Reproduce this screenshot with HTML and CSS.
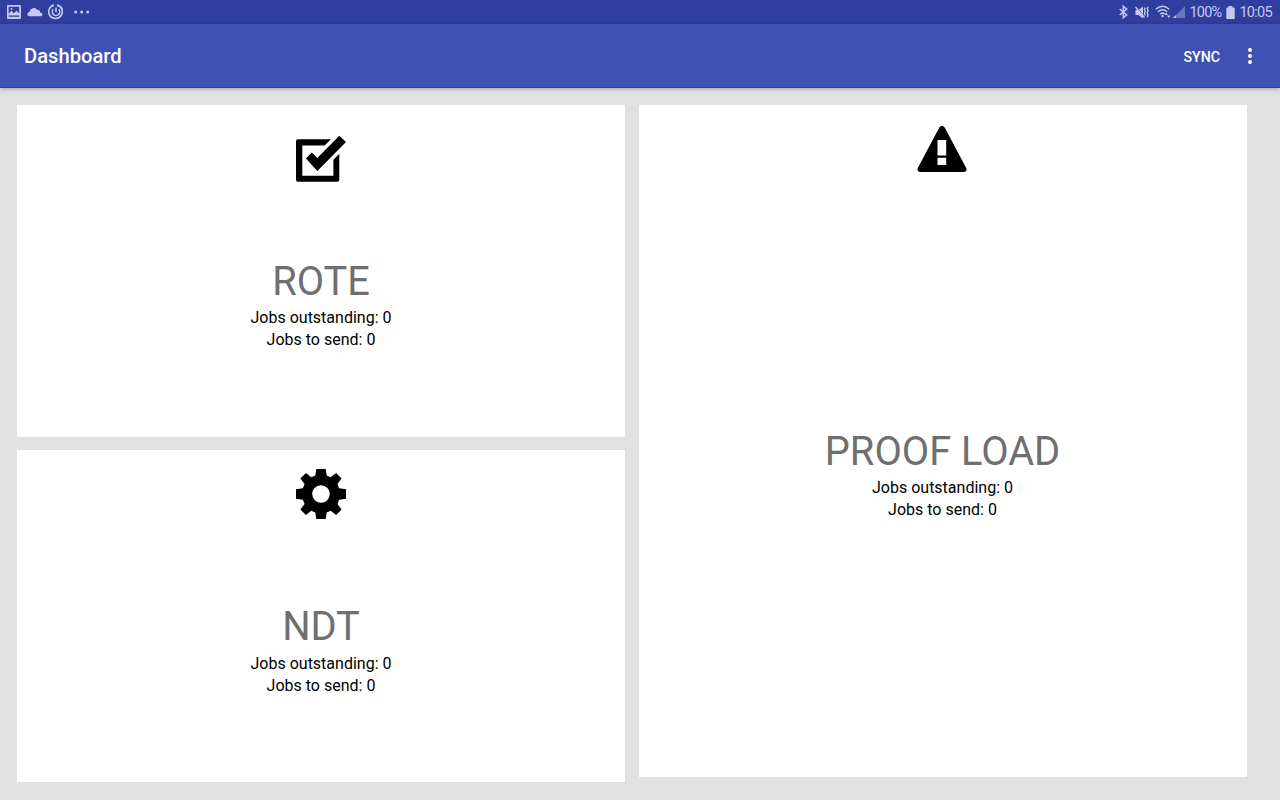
FILE: index.html
```
<!DOCTYPE html>
<html lang="en">
<head>
	<meta charset="UTF-8">
	<title>Dashboard</title>
	<link rel="stylesheet" href="styles.css">
</head>
<body>
	<div class="status-bar">
		<div class="status-left">
			<svg width="14" height="14" viewBox="0 0 14 14"><path fill-rule="evenodd" d="M1 0h12a1 1 0 0 1 1 1v12a1 1 0 0 1-1 1H1a1 1 0 0 1-1-1V1a1 1 0 0 1 1-1zM1.600 1.800v7l2.800-3 2.400 2.500 2.800-2.500 2.600 2.500V1.800zM1.600 10.500v1.300h10.600v-1.300z"/><circle cx="4.500" cy="4" r="1"/></svg>
			<svg class="cloud" width="16" height="10" viewBox="0 0 16 10"><path d="M2.600 9.300a2.200 2.200 0 0 1-.2-4.400A4.500 4.500 0 0 1 10.500 3a2.700 2.700 0 0 1 2.800 2.700A1.800 1.800 0 0 1 13.800 9.300z"/></svg>
			<svg class="power" width="16" height="16" viewBox="0 0 16 16"><g fill="none" stroke="#c3c9f0" stroke-width="1.600"><path d="M9 1.100a6.800 6.800 0 1 1-3 0M10.500 1.500a6.800 6.800 0 0 1 4 4"/><path d="M5.300 5.300a3.700 3.700 0 1 0 5.400 0M8 3.500v4.800"/></g></svg>
			<svg class="more" width="16" height="4" viewBox="0 0 16 4"><circle cx="1.700" cy="2" r="1.500"/><circle cx="7.700" cy="2" r="1.500"/><circle cx="13.700" cy="2" r="1.500"/></svg>
		</div>
		<div class="status-right">
			<svg width="9" height="14" viewBox="0 0 9 14"><path fill="none" stroke="#c3c9f0" stroke-width="1.500" d="M.7 4l7 6L4.300 12.700V1.300L7.700 4l-7 6"/></svg>
			<svg class="mute" width="14" height="13" viewBox="0 0 14 13"><path d="M.5 4h3L8 .5v12L3.500 9h-3z"/><path fill="none" stroke="#303f9f" stroke-width="1" d="M1.500 .8l8 9.700"/><path fill="none" stroke="#c3c9f0" stroke-width="1.300" d="M.5 1l9 10.500M10 1.500l-.6 2 .8 2-.8 2 .8 2M13 .8l-.8 2 .8 2-.8 2 .8 2-.8 2.500"/></svg>
			<svg class="wifi" width="16" height="14" viewBox="0 0 16 14"><path fill="none" stroke="#c3c9f0" stroke-width="1.400" d="M.7 4.300Q7.500-2 14.300 4.300M3 6.800Q7.500 2.600 12 6.800M5 9.200Q7.500 6.800 9.800 9.200"/><circle cx="7.500" cy="11" r="1.200"/><path d="M9.500 10l1.700-2.500L13 10zM12 10.500h3.500L13.700 13z"/></svg>
			<svg class="signal" width="12" height="12" viewBox="0 0 12 12"><path opacity=".4" d="M12 0v12H0z"/><path d="M3 9v3H0z"/></svg>
			<span class="battery-text">100%</span>
			<svg class="battery" width="9" height="13" viewBox="0 0 9 13"><path d="M2.500 0h4v1.500H8a.7.700 0 0 1 .7.700v10a.7.700 0 0 1-.7.700H1a.7.700 0 0 1-.7-.7v-10A.7.700 0 0 1 1 1.500h1.500z"/></svg>
			<span class="clock">10:05</span>
		</div>
	</div>
	<div class="app-bar">
		<div class="title">Dashboard</div>
		<div class="sync">SYNC</div>
		<svg class="overflow" width="4" height="16" viewBox="0 0 4 16"><circle cx="2" cy="2" r="2"/><circle cx="2" cy="8" r="2"/><circle cx="2" cy="14" r="2"/></svg>
	</div>
	<div class="board">
		<div class="column">
			<div class="card card-rote">
				<svg class="icon" width="50" height="50" viewBox="0 0 50 50">
					<path fill-rule="evenodd" d="M2 4.300h39.300a2 2 0 0 1 2 2v38.400a2 2 0 0 1-2 2H2a2 2 0 0 1-2-2V6.300a2 2 0 0 1 2-2zM6.300 10.600v30.200h31.100V10.600z"/>
					<path class="gap" d="M21.300 23L43.300.7 50 7 21.300 36z"/>
					<path d="M10 23.500l5.700-6L21.300 23 43.300.7 50 7 21.300 36z"/>
				</svg>
				<div class="name">ROTE</div>
				<div class="jobs">Jobs outstanding: 0</div>
				<div class="jobs">Jobs to send: 0</div>
			</div>
			<div class="card card-ndt">
				<svg class="icon" width="50" height="50" viewBox="0 0 50 50">
					<path fill-rule="evenodd" d="M20.300 0h9.400l1 6.600 4 1.700 5.400-4.200 5.500 5.500-4.200 5.500 1.700 4.100 6.900 1v9.600l-6.900 1-1.700 4.100 4.200 5.500-5.500 5.500-5.400-4.200-4 1.700-1 6.600h-9.400l-1-6.600-4-1.700-5.400 4.200-5.500-5.500 4.200-5.500-1.700-4.100-6.900-1v-9.600l6.900-1 1.700-4.100-4.200-5.500 5.500-5.500 5.400 4.200 4-1.700zM25 16.200a8.800 8.800 0 1 0 0 17.600 8.800 8.800 0 0 0 0-17.600z"/>
				</svg>
				<div class="name">NDT</div>
				<div class="jobs">Jobs outstanding: 0</div>
				<div class="jobs">Jobs to send: 0</div>
			</div>
		</div>
		<div class="column">
			<div class="card card-proof">
				<svg class="icon" width="50" height="50" viewBox="0 0 50 50">
					<path fill-rule="evenodd" d="M22.300 2.500Q25 -1 27.700 2.500L49.200 43Q50.500 46.500 46.500 47H3.500Q-.5 46.500 .8 43zM20.500 15v15.500h8.700V15zM20.500 32.700V40h8.700v-7.300z"/>
				</svg>
				<div class="name">PROOF LOAD</div>
				<div class="jobs">Jobs outstanding: 0</div>
				<div class="jobs">Jobs to send: 0</div>
			</div>
		</div>
	</div>
</body>
</html>
```
FILE: styles.css
```
*{
	box-sizing: border-box;
}
body{
	margin: 0;
	height: 800px;
	overflow: hidden;
	background: #e1e1e1;
	font-family: Roboto, sans-serif;
	color: #000;
}
svg{
	display: block;
	flex: none;
}
.status-bar{
	display: flex;
	justify-content: space-between;
	height: 24px;
	padding: 0 8px 0 7px;
	background: #303f9f;
	color: #c3c9f0;
	fill: #c3c9f0;
	font-size: 14.5px;
	line-height: 20px;
}
.status-left,
.status-right{
	display: flex;
	align-items: center;
}
.cloud{
	margin-left: 6px;
}
.power{
	margin-left: 5px;
}
.more{
	margin-left: 10px;
}
.mute{
	margin-left: 7px;
}
.wifi{
	margin-left: 6px;
}
.signal{
	margin-left: 2px;
}
.battery-text{
	margin-left: 5px;
	padding-top: 2px;
	letter-spacing: -.8px;
}
.battery{
	margin: 0 4px 0 5px;
}
.clock{
	padding-top: 2px;
	letter-spacing: -.7px;
}
.app-bar{
	position: relative;
	display: flex;
	align-items: center;
	height: 64px;
	padding: 1px 28px 0 24px;
	background: #3f51b5;
	border-bottom: 1px solid #2c3f9b;
	box-shadow: 0 1px 4px rgba(0,0,0,.3);
	color: #fff;
	fill: #fff;
}
.title{
	flex: 1;
	font-size: 20.2px;
	font-weight: 500;
}
.sync{
	padding-top: 1px;
	font-size: 14.2px;
	font-weight: 500;
}
.overflow{
	margin-left: 28px;
}
.board{
	display: flex;
	gap: 13.5px;
	padding: 17px;
}
.column{
	display: flex;
	flex-direction: column;
	gap: 13px;
	width: 608px;
}
.card{
	display: flex;
	flex-direction: column;
	align-items: center;
	height: 332.2px;
	background: #fff;
}
.card-rote{
	padding-top: 30px;
}
.card-ndt{
	padding-top: 19px;
}
.card-proof{
	height: 672px;
	padding-top: 20px;
}
.icon{
	margin-bottom: 72px;
}
.card-ndt .icon{
	margin-bottom: 83px;
}
.card-proof .icon{
	margin: 0 1px 252px 0;
}
.gap{
	stroke: #fff;
	stroke-width: 7px;
	stroke-linejoin: round;
}
.name{
	height: 50px;
	line-height: 50px;
	font-size: 39.8px;
	color: #6f6f6f;
}
.card-ndt .name{
	height: 51px;
}
.jobs{
	height: 22px;
	line-height: 22px;
	font-size: 16px;
}
```
